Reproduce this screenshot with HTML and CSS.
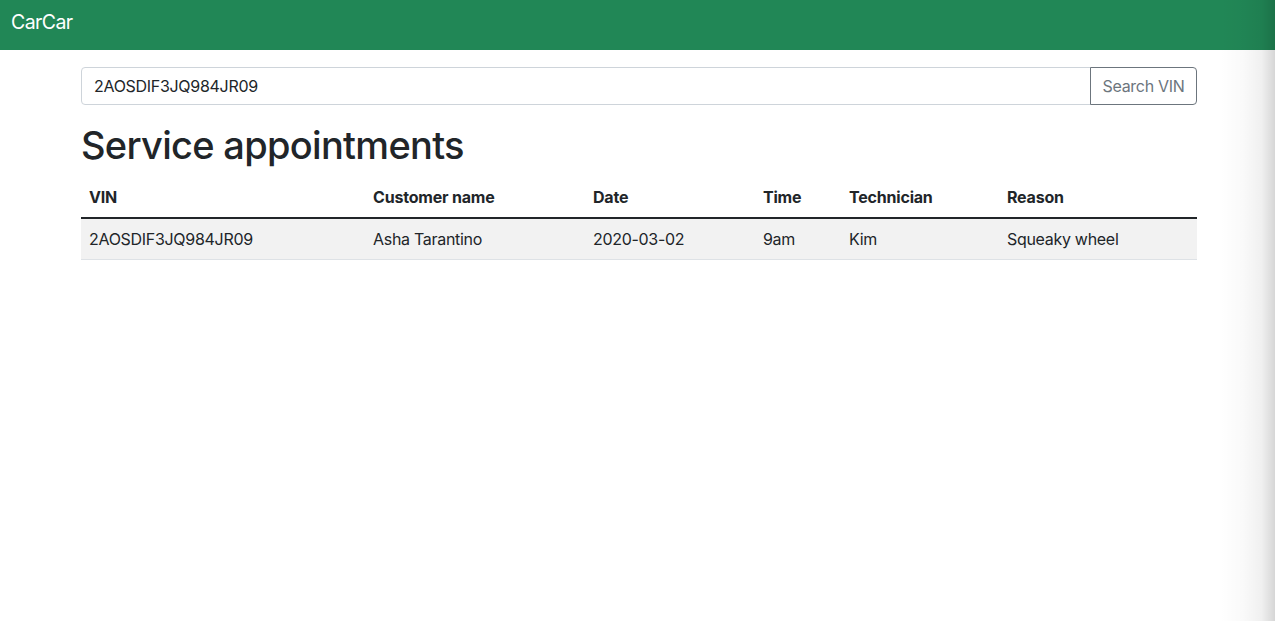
FILE: index.html
```html
<!DOCTYPE html>
<html lang="en">
<head>
<meta charset="utf-8">
<title>CarCar</title>
<link rel="stylesheet" href="styles.css">
</head>
<body>
<nav class="navbar">
  <a class="brand" href="#">CarCar</a>
</nav>
<main class="container">
  <form class="search">
    <input class="search-input" type="text" value="2AOSDIF3JQ984JR09">
    <button class="search-btn" type="button">Search VIN</button>
  </form>
  <h1 class="title">Service appointments</h1>
  <table class="table">
    <thead>
      <tr>
        <th class="c-vin">VIN</th>
        <th class="c-name">Customer name</th>
        <th class="c-date">Date</th>
        <th class="c-time">Time</th>
        <th class="c-tech">Technician</th>
        <th class="c-reason">Reason</th>
      </tr>
    </thead>
    <tbody>
      <tr>
        <td>2AOSDIF3JQ984JR09</td>
        <td>Asha Tarantino</td>
        <td>2020-03-02</td>
        <td>9am</td>
        <td>Kim</td>
        <td>Squeaky wheel</td>
      </tr>
    </tbody>
  </table>
</main>
<div class="edge-shadow"></div>
</body>
</html>
```
FILE: styles.css
```css
* { box-sizing: border-box; }
html, body { margin: 0; padding: 0; }
body {
  font-family: Inter, "Noto Sans", "Liberation Sans", sans-serif;
  font-size: 16px;
  line-height: 1.5;
  color: #212529;
  background: #fff;
  min-height: 621px;
  position: relative;
  overflow: hidden;
}
.navbar {
  height: 50px;
  background: #218756;
  display: flex;
  align-items: flex-start;
  padding: 7px 11px 0;
}
.brand {
  color: #fff;
  text-decoration: none;
  font-size: 19.5px;
  line-height: 30px;
  letter-spacing: -0.6px;
}
.container {
  width: 1116px;
  margin-left: 81px;
  padding-top: 17px;
}
.search {
  display: flex;
  margin: 0;
}
.search-input {
  flex: 1;
  height: 38px;
  border: 1px solid #ced4da;
  border-radius: 4px 0 0 4px;
  padding: 6px 12px;
  font: inherit;
  color: #212529;
  outline: none;
  letter-spacing: -0.3px;
}
.search-btn {
  height: 38px;
  width: 107px;
  margin-left: -1px;
  border: 1px solid #6c757d;
  border-radius: 0 4px 4px 0;
  background: #fff;
  color: #6c757d;
  font: inherit;
  padding: 6px 0;
  white-space: nowrap;
  letter-spacing: -0.3px;
}
.title {
  font-size: 38px;
  font-weight: 500;
  line-height: 48px;
  margin: 16px 0 8px;
  letter-spacing: -0.7px;
}
.table {
  width: 100%;
  border-collapse: collapse;
  table-layout: fixed;
}
.table th, .table td {
  text-align: left;
  padding: 8px;
  line-height: 24px;
  letter-spacing: -0.3px;
}
.table th {
  font-weight: 700;
  font-size: 16px;
  letter-spacing: -0.2px;
  border-bottom: 2px solid #212529;
}
.table td {
  background: #f2f2f2;
  border-bottom: 1px solid #dee2e6;
}
.c-vin { width: 284px; }
.c-name { width: 220px; }
.c-date { width: 170px; }
.c-time { width: 86px; }
.c-tech { width: 158px; }
.c-reason { width: 198px; }
.edge-shadow {
  position: absolute;
  top: 0;
  right: 0;
  width: 55px;
  height: 100%;
  pointer-events: none;
  background: linear-gradient(to right, rgba(0,0,0,0) 0%, rgba(0,0,0,0.02) 40%, rgba(0,0,0,0.06) 75%, rgba(0,0,0,0.16) 100%);
}
```
